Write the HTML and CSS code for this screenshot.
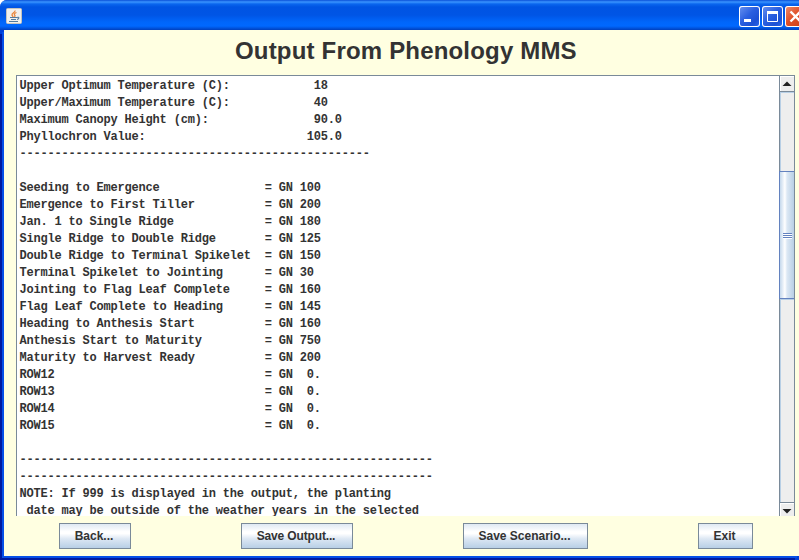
FILE: index.html
```html
<!DOCTYPE html>
<html lang="en">
<head>
<meta charset="utf-8">
<title>Output From Phenology MMS</title>
<link rel="stylesheet" href="styles.css">
</head>
<body>
<div class="window">
  <header class="titlebar">
    <svg class="app-icon" width="16" height="16" viewBox="0 0 16 16">
      <rect x="0.5" y="0.5" width="15" height="15" rx="1" fill="#f0f0ee" stroke="#c5c3bd"/>
      <path d="M9 2.500C9.500 4.500 5.500 5 6 7c.2.8 1 1.200 1 2M10.500 4.500C8 5.500 8 6.500 8.800 7.300c.5.5.2 1.200-.5 1.700" fill="none" stroke="#e8853a" stroke-width="1.300"/>
      <path d="M4 9.500h7M5 11.500h5M3 13.500h9M11 9.500c2.500-1 2.500 1.500 0 2" fill="none" stroke="#527a9d" stroke-width="1.100"/>
    </svg>
    <div class="controls">
      <svg class="control" viewBox="0 0 21 21"><rect x="5" y="13" width="7" height="3" fill="#fff"/></svg>
      <svg class="control" viewBox="0 0 21 21"><path d="M5.500 6V15.500H15.500V6Z" fill="none" stroke="#fff"/><rect x="5" y="5" width="11" height="3" fill="#fff"/></svg>
      <svg class="control close" viewBox="0 0 21 21"><path d="M5.500 5.500L15.500 15.500M15.500 5.500L5.500 15.500" stroke="#fff" stroke-width="2.400"/></svg>
    </div>
  </header>
  <main class="content">
    <h1 class="heading">Output From Phenology MMS</h1>
    <section class="scrollpane">
<pre class="output">Upper Optimum Temperature (C):            18
Upper/Maximum Temperature (C):            40
Maximum Canopy Height (cm):               90.0
Phyllochron Value:                       105.0
--------------------------------------------------

Seeding to Emergence               = GN 100
Emergence to First Tiller          = GN 200
Jan. 1 to Single Ridge             = GN 180
Single Ridge to Double Ridge       = GN 125
Double Ridge to Terminal Spikelet  = GN 150
Terminal Spikelet to Jointing      = GN 30
Jointing to Flag Leaf Complete     = GN 160
Flag Leaf Complete to Heading      = GN 145
Heading to Anthesis Start          = GN 160
Anthesis Start to Maturity         = GN 750
Maturity to Harvest Ready          = GN 200
ROW12                              = GN  0.
ROW13                              = GN  0.
ROW14                              = GN  0.
ROW15                              = GN  0.

-----------------------------------------------------------
-----------------------------------------------------------
NOTE: If 999 is displayed in the output, the planting
 date may be outside of the weather years in the selected</pre>
      <div class="scrollbar">
        <div class="arrow up"><svg width="10" height="5" viewBox="0 0 10 5"><path d="M0.500 5L5 0.500L9.500 5Z" fill="#222"/></svg></div>
        <div class="track-above"></div>
        <div class="thumb"><div class="grip"></div></div>
        <div class="track-below"></div>
        <div class="arrow down"><svg width="10" height="5" viewBox="0 0 10 5"><path d="M0.500 0L5 4.500L9.500 0Z" fill="#222"/></svg></div>
      </div>
    </section>
    <footer class="buttons">
      <button class="btn back">Back...</button>
      <button class="btn save-output">Save Output...</button>
      <button class="btn save-scenario">Save Scenario...</button>
      <button class="btn exit">Exit</button>
    </footer>
  </main>
</div>
</body>
</html>
```
FILE: styles.css
```css
* { box-sizing: border-box; }
body { margin: 0; overflow: hidden; background: #fff; font-family: "Liberation Sans", Arial, sans-serif; }
.window {
  width: 799px;
  height: 560px;
  display: flex;
  flex-direction: column;
  overflow: hidden;
  border-top-left-radius: 7px;
  background: #0040d8;
}
.titlebar {
  height: 30px;
  flex: none;
  display: flex;
  justify-content: space-between;
  overflow: hidden;
  background: linear-gradient(#0a50d8 0, #3a94ff 2px, #0a66ee 4px, #0054e3 7px, #0055e5 15px, #0066fb 22px, #0068ff 26px, #0055e0 28px, #0040bd 30px);
}
.app-icon { margin: 8px 0 0 6px; }
.controls { width: 60px; display: flex; gap: 2px; padding-top: 6px; }
.control {
  width: 21px;
  height: 21px;
  flex: none;
  border-radius: 3px;
  box-shadow: inset 0 0 0 1px #fff;
  background: linear-gradient(135deg, #6b93f0, #2a5fe0 45%, #1c50d4 75%, #2f6cf0);
}
.close { background: linear-gradient(135deg, #f09070, #e0512a 45%, #cc3c12); }
.content {
  flex: 1;
  min-height: 0;
  display: flex;
  flex-direction: column;
  margin-left: 4px;
  margin-bottom: 4px;
  background: #ffffe1;
  box-shadow: -2px 2px 0 #0650e8, -4px 4px 0 #001ba0;
}
.heading {
  height: 45px;
  flex: none;
  margin: 0 0 0 231px;
  font-size: 24px;
  line-height: 42px;
  font-weight: bold;
  letter-spacing: 0.180px;
  white-space: nowrap;
  color: #333;
}
.scrollpane {
  width: 779px;
  height: 441px;
  flex: none;
  display: flex;
  justify-content: space-between;
  margin-left: 12px;
  overflow: hidden;
  background: #fff;
  border: solid #7a8a99;
  border-width: 1px 0 0 1px;
}
.output {
  margin: 0;
  padding: 2px 0 0 2.500px;
  font: bold 12px/17px "Liberation Mono", "Courier New", monospace;
  letter-spacing: -0.195px;
  color: #333;
}
.scrollbar {
  width: 16px;
  height: 440px;
  display: flex;
  flex-direction: column;
  background: #eee;
  border: solid #7a8a99;
  border-width: 0 1px;
}
.arrow { display: flex; justify-content: center; background: #eee; box-shadow: inset 1px 1px #fff; }
.up { height: 16px; padding-top: 5px; border-bottom: 1px solid #7a8a99; }
.down { height: 14px; padding-top: 6px; border-top: 1px solid #7a8a99; }
.track-above { height: 79px; box-shadow: inset 1px 1px #b8cfe5; }
.track-below { flex: 1; box-shadow: inset 1px 1px #b8cfe5; }
.thumb {
  height: 128px;
  display: flex;
  align-items: center;
  justify-content: center;
  margin-left: -1px;
  border: solid #6382bf;
  border-width: 1px 0 1px 1px;
  background: linear-gradient(90deg, #c4d8ec, #fff 35%, #dce8f4 50%, #b8cfe5);
}
.grip {
  width: 9px;
  height: 6px;
  margin-top: 1px;
  background: repeating-linear-gradient(#6382bf 0 1px, #fff 1px 2px);
}
.buttons { flex: 1; display: flex; padding: 7px 0 0 55px; }
.btn {
  height: 26px;
  flex: none;
  padding: 0 2px 0 0;
  border: 1px solid #7a8a99;
  border-radius: 0;
  background: linear-gradient(#dfe9f3, #fff 32%, #fff 40%, #dce7f3 62%, #b8cfe5);
  color: #333;
  font: bold 12px/24px "Liberation Sans", Arial, sans-serif;
  white-space: nowrap;
}
.back { width: 72px; }
.save-output { width: 112px; margin-left: 110px; letter-spacing: -0.150px; }
.save-scenario { width: 125px; margin-left: 110px; letter-spacing: 0; }
.exit { width: 55px; margin-left: 110px; }
```
